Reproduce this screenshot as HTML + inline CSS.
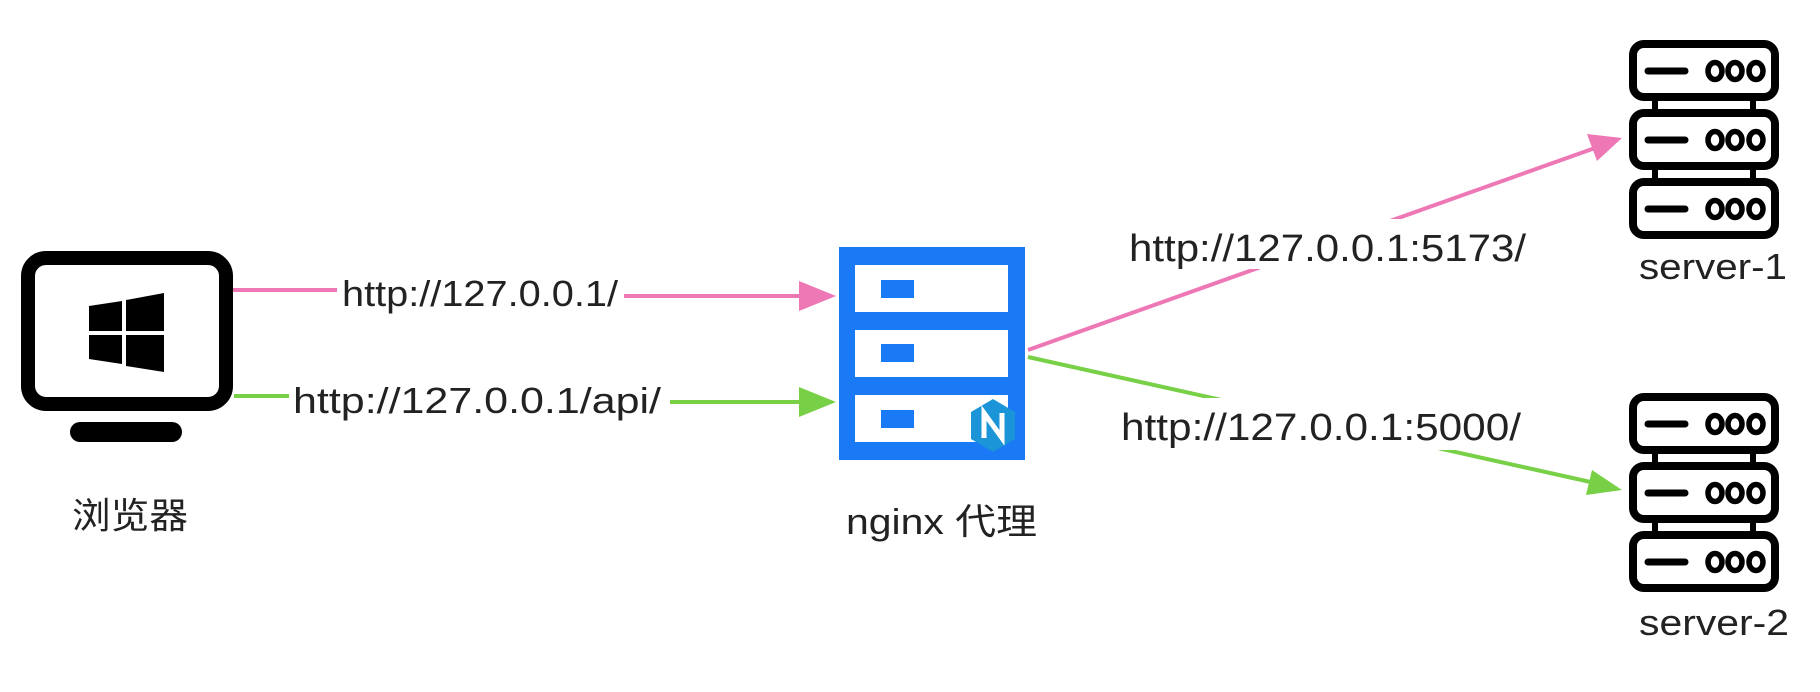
<!DOCTYPE html>
<html><head><meta charset="utf-8"><style>
html,body{margin:0;padding:0;background:#fff;}
svg{display:block;}
text{font-family:"Liberation Sans","Noto Sans CJK SC",sans-serif;fill:#222;}
</style></head><body>
<svg width="1820" height="692" viewBox="0 0 1820 692" xmlns="http://www.w3.org/2000/svg">
<defs>
<g id="unit">
  <rect x="4" y="4" width="142" height="53" rx="11" fill="#fff" stroke="#000" stroke-width="8"/>
  <line x1="19" y1="31" x2="56" y2="31" stroke="#000" stroke-width="7" stroke-linecap="round"/>
  <ellipse cx="86" cy="31" rx="7" ry="8.5" fill="#fff" stroke="#000" stroke-width="5.5"/>
  <ellipse cx="106" cy="31" rx="7" ry="8.5" fill="#fff" stroke="#000" stroke-width="5.5"/>
  <ellipse cx="127" cy="31" rx="7" ry="8.5" fill="#fff" stroke="#000" stroke-width="5.5"/>
</g>
<g id="server">
  <rect x="23" y="57" width="6" height="14" fill="#000"/><rect x="121" y="57" width="6" height="14" fill="#000"/>
  <rect x="23" y="126" width="6" height="14" fill="#000"/><rect x="121" y="126" width="6" height="14" fill="#000"/>
  <use href="#unit" x="0" y="0"/>
  <use href="#unit" x="0" y="69"/>
  <use href="#unit" x="0" y="138"/>
</g>
</defs>

<rect x="28" y="258" width="198" height="146" rx="18" fill="#fff" stroke="#000" stroke-width="14"/>
<rect x="70" y="422" width="112" height="20" rx="10" fill="#000"/>
<polygon points="89,306 122,301 122,331 89,331" fill="#000"/>
<polygon points="126,300 164,293 164,331 126,331" fill="#000"/>
<polygon points="89,335 122,335 122,364 89,359" fill="#000"/>
<polygon points="126,335 164,335 164,372 126,366" fill="#000"/>
<text x="72" y="528" font-size="36" textLength="116" lengthAdjust="spacingAndGlyphs">浏览器</text>

<line x1="233" y1="290" x2="337" y2="290" stroke="#ee77b5" stroke-width="4"/>
<line x1="624" y1="296" x2="805" y2="296" stroke="#ee77b5" stroke-width="4"/>
<polygon points="836,296 799,281 799,311" fill="#ee77b5"/>
<text x="342" y="306" font-size="36" textLength="276" lengthAdjust="spacingAndGlyphs">http://127.0.0.1/</text>

<line x1="234" y1="396" x2="289" y2="396" stroke="#77d045" stroke-width="4"/>
<line x1="670" y1="402" x2="805" y2="402" stroke="#77d045" stroke-width="4"/>
<polygon points="836,402 799,387 799,417" fill="#77d045"/>
<text x="293" y="413" font-size="36" textLength="368" lengthAdjust="spacingAndGlyphs">http://127.0.0.1/api/</text>

<rect x="839" y="247" width="186" height="213" fill="#1a7af5"/>
<rect x="855" y="265" width="153" height="47" fill="#fff"/>
<rect x="855" y="330" width="153" height="47" fill="#fff"/>
<rect x="855" y="395" width="153" height="47" fill="#fff"/>
<rect x="881" y="280" width="33" height="18" fill="#1a7af5"/>
<rect x="881" y="344" width="33" height="18" fill="#1a7af5"/>
<rect x="881" y="410" width="33" height="18" fill="#1a7af5"/>
<polygon points="993,399 1015,412 1015,439 993,452 971,439 971,412" fill="#1b95d8"/>
<path d="M984,438 V413 L1002,438 V413" fill="none" stroke="#fff" stroke-width="5"/>
<text x="846" y="534" font-size="36" textLength="191" lengthAdjust="spacingAndGlyphs">nginx 代理</text>

<line x1="1028" y1="350" x2="1595" y2="148" stroke="#ee77b5" stroke-width="4"/>
<polygon points="1622,138 1587,134 1597,161" fill="#ee77b5"/>
<line x1="1028" y1="357" x2="1595" y2="483" stroke="#77d045" stroke-width="4"/>
<polygon points="1622,490 1592,470 1586,495" fill="#77d045"/>
<rect x="1122" y="219" width="408" height="50" fill="#fff"/>
<text x="1129" y="261" font-size="38" textLength="397" lengthAdjust="spacingAndGlyphs">http://127.0.0.1:5173/</text>
<rect x="1115" y="398" width="410" height="52" fill="#fff"/>
<text x="1121" y="440" font-size="38" textLength="400" lengthAdjust="spacingAndGlyphs">http://127.0.0.1:5000/</text>

<use href="#server" x="1629" y="40"/>
<use href="#server" x="1629" y="393"/>
<text x="1639" y="279" font-size="36" textLength="148" lengthAdjust="spacingAndGlyphs">server-1</text>
<text x="1639" y="635" font-size="36" textLength="150" lengthAdjust="spacingAndGlyphs">server-2</text>
</svg>
</body></html>
